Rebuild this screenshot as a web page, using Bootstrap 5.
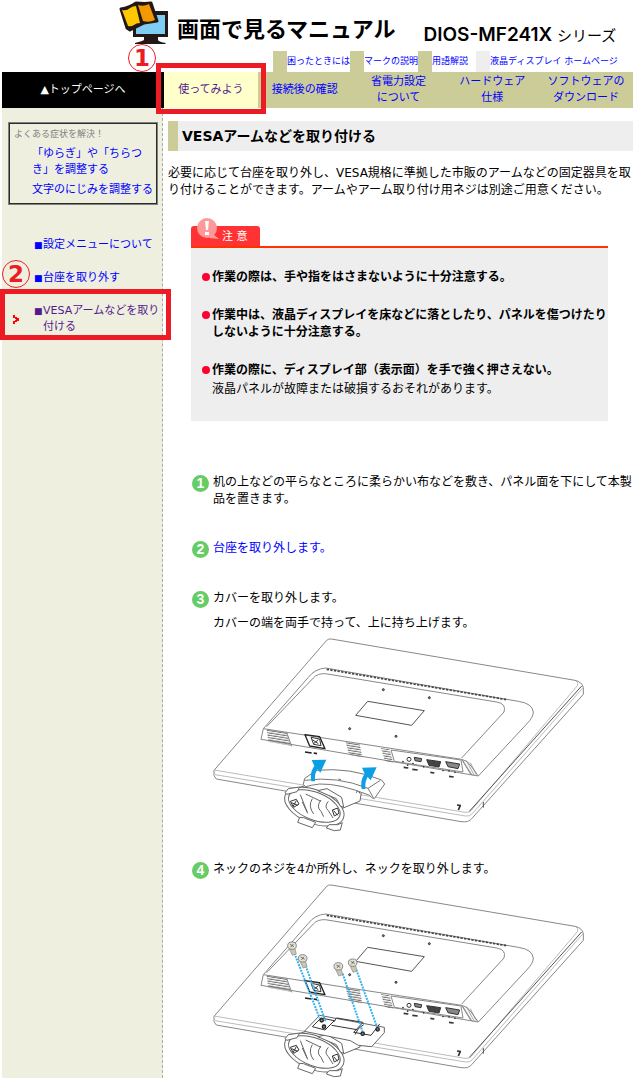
<!DOCTYPE html>
<html lang="ja">
<head>
<meta charset="utf-8">
<meta name="viewport" content="width=device-width, initial-scale=1">
<title>VESAアームなどを取り付ける</title>
<link href="https://cdn.jsdelivr.net/npm/bootstrap@5.3.0/dist/css/bootstrap.min.css" rel="stylesheet">
<script src="https://cdn.jsdelivr.net/npm/bootstrap@5.3.0/dist/js/bootstrap.bundle.min.js" defer></script>
<style>
:root { --khaki: #cccc99; --pale: #efefe0; --grey: #eeeeee; --mark-red: #ed1c24; }
body { font-family: "DejaVu Sans", "Noto Sans CJK JP", sans-serif; font-size: 12px; line-height: 17px; color: #000; background: #fff; }
a { color: #00f; text-decoration: none; }
a:hover { text-decoration: underline; }
a.visited-link { color: #551a8b; }
.site-head { height: 51px; padding-left: 118px; }
.site-title { font-family: "Noto Sans CJK JP", sans-serif; font-size: 22px; line-height: 28px; font-weight: 700; margin: 13px 0 0 8px; white-space: nowrap; }
.model { font-family: Inter, "Noto Sans CJK JP", sans-serif; font-size: 19px; line-height: 24px; font-weight: 600; margin: 23px 0 0 28px; white-space: nowrap; }
.model span { font-size: 15px; font-weight: 400; }
.util { height: 21px; font-size: 9px; line-height: 21px; margin-left: 273px; white-space: nowrap; }
.util a { border-left: 14px solid var(--khaki); }
.util a.outside { border-color: var(--grey); }
.main-nav { margin-left: 2px; font-size: 11px; line-height: 16px; background: var(--khaki); }
.main-nav > * { height: 36px; }
.main-nav .home-cell { width: 162px; background: #000; color: #fff; flex: none; }
.nav-cell { flex: 1 1 0; min-width: 0; }
.now-cell { background: #ffffcc; }
.ring { border: 5px solid var(--mark-red); position: absolute; z-index: 2; pointer-events: none; }
.ring-nav { inset: -9px -8px -6px -8px; }
.ring-side { inset: -14px -9px -5px -2px; }
.num { position: absolute; z-index: 3; width: 28px; height: 28px; border: 1px solid var(--mark-red); border-radius: 50%; background: #fff; color: var(--mark-red); font-size: 23px; line-height: 26px; font-weight: 700; text-align: center; }
.num-nav { left: -36px; top: -28px; }
.num-side { left: 0; top: -43px; background: var(--pale); }
.side { width: 161px; margin-left: 2px; flex: none; background: var(--pale); border-right: 1px dashed #aaa; font-size: 11px; line-height: 16px; }
.faq { margin: 14px 4px 0 6px; height: 83px; border: 1px solid #808080; box-shadow: inset 0 0 0 1px #2c2c2c; padding: 3px 0 0 5px; white-space: nowrap; }
.faq h2 { font-size: 9px; line-height: 16px; color: #808080; margin: 0 0 4px; font-weight: 400; }
.faq a { display: block; margin: 0 0 4px 18px; }
.menu { margin-top: 32px; }
.menu li { position: relative; margin-bottom: 17px; padding-left: 32px; }
.sq { width: 9px; flex: none; font-size: 9px; }
.chev { position: absolute; left: 11px; top: 12px; }
.page-body { padding: 13px 0 0 5px; min-width: 0; }
.page-title { font-size: 14px; line-height: 30px; font-weight: 700; background: var(--grey); border-left: 10px solid var(--khaki); padding-left: 4px; margin: 0 0 14px; }
.caution { margin: 27px 25px 0 23px; }
.tab { width: 69px; height: 20px; border-radius: 3px 3px 0 0; background: #f33; color: #fff; position: relative; font-size: 11px; line-height: 22px; padding-left: 31px; }
.tab svg { position: absolute; left: 5px; top: -9px; }
.caution-box { background: var(--grey); border-top: 2px solid #f30; padding: 21px 0 23px 11px; }
.caution-box li { margin-bottom: 21px; display: flex; white-space: nowrap; }
.caution-box li:last-child { margin-bottom: 0; }
.caution-box p { margin-top: 2px; }
.dot { width: 8px; height: 8px; border-radius: 50%; background: #ff0033; margin: 4px 2px 0 0; flex: none; }
.steps { margin: 53px 0 0 23px; }
.steps li { display: flex; margin-bottom: 32px; }
.step-no { width: 17px; height: 17px; margin: 1px 4px 0 1px; border-radius: 50%; background: #6c6; color: #fff; font: 700 14px/17px "Liberation Sans", sans-serif; text-align: center; flex: none; }
.step-text { flex: 1; min-width: 0; }
.steps .drawing { margin-bottom: 29px; }
.steps .drawing:last-child { margin-bottom: 0; }
.figure-art { display: block; width: 380px; max-width: none; height: auto; margin-left: -8px; }
</style>
</head>
<body>
<header>
  <div class="site-head d-flex">
    <svg width="51" height="47" viewBox="0 0 51 47" aria-hidden="true" class="flex-shrink-0">
      <path d="M26 36h14v4q1 2 8 3l-1 1H17v-1q8-2 9-3z" fill="#231815"/>
      <path d="M17 11h33v26H15V28z" fill="#231815"/>
      <path d="M30 15h17v19H18v-6z" fill="#7ecef4"/>
      <path d="M3 9q8-1 15-6 9 1 15 0l6 18-13 2-6 3-8 4-3-2z" fill="#231815" stroke="#231815" stroke-width="3" stroke-linejoin="round"/>
      <path d="M4 10q5 1 8-2 3-2 6-2l4 17q-4 0-6 2-3 2-6 1z" fill="#fdc800"/>
      <path d="M20 5q6 2 11-1l6 16q-6 3-12 1z" fill="#f39800"/>
    </svg>
    <h1 class="site-title">画面で見るマニュアル</h1>
    <div class="model">DIOS-MF241X <span>シリーズ</span></div>
  </div>
  <div class="util d-flex">
    <a href="#">困ったときには</a><a href="#">マークの説明</a><a href="#">用語解説</a><a href="#" class="outside ms-2">液晶ディスプレイ ホームページ</a>
  </div>
  <nav class="main-nav d-flex text-center">
    <a href="#" class="home-cell d-flex align-items-center justify-content-center">▲トップページへ</a>
    <div class="nav-cell now-cell position-relative d-flex align-items-center justify-content-center">
      <a href="#" class="visited-link">使ってみよう</a>
      <span class="ring ring-nav"></span><span class="num num-nav">1</span>
    </div>
    <a href="#" class="nav-cell d-flex align-items-center justify-content-center">接続後の確認</a>
    <a href="#" class="nav-cell d-flex align-items-center justify-content-center">省電力設定<br>について</a>
    <a href="#" class="nav-cell d-flex align-items-center justify-content-center">ハードウェア<br>仕様</a>
    <a href="#" class="nav-cell d-flex align-items-center justify-content-center">ソフトウェアの<br>ダウンロード</a>
  </nav>
</header>
<div class="d-flex">
  <aside class="side">
    <section class="faq">
      <h2>よくある症状を解決！</h2>
      <a href="#">「ゆらぎ」や「ちらつ<br>き」を調整する</a>
      <a href="#">文字のにじみを調整する</a>
    </section>
    <ul class="menu list-unstyled mb-0">
      <li><a href="#" class="d-flex"><span class="sq">■</span>設定メニューについて</a></li>
      <li><a href="#" class="d-flex"><span class="sq">■</span>台座を取り外す</a></li>
      <li><a href="#" class="d-flex visited-link"><span class="sq">■</span><span>VESAアームなどを取り付ける</span></a>
        <svg class="chev" width="7" height="9" viewBox="0 0 7 9" aria-hidden="true"><path d="M0 0h2v2h2v1h2v3H4v1H2v2H0V6h2V5h1V4H2V3H0z" fill="#f00"/></svg>
        <span class="ring ring-side"></span><span class="num num-side">2</span>
      </li>
    </ul>
  </aside>
  <main class="page-body flex-grow-1">
    <h2 class="page-title">VESAアームなどを取り付ける</h2>
    <p class="mb-0">必要に応じて台座を取り外し、VESA規格に準拠した市販のアームなどの固定器具を取<br>り付けることができます。アームやアーム取り付け用ネジは別途ご用意ください。</p>
    <section class="caution">
      <div class="tab">注 意
        <svg width="24" height="24" viewBox="0 0 24 24" aria-hidden="true"><path d="M17 17l6 5-10-1z" fill="#ff9999"/><circle cx="11" cy="11" r="10" fill="#ff9999"/><path d="M9 4h4l-1 9h-2zM9 15h4v3H9z" fill="#fff"/></svg>
      </div>
      <div class="caution-box">
        <ul class="list-unstyled mb-0">
          <li><span class="dot"></span><strong>作業の際は、手や指をはさまないように十分注意する。</strong></li>
          <li><span class="dot"></span><strong>作業中は、液晶ディスプレイを床などに落としたり、パネルを傷つけたり<br>しないように十分注意する。</strong></li>
          <li><span class="dot"></span><div><strong>作業の際に、ディスプレイ部（表示面）を手で強く押さえない。</strong><p class="mb-0">液晶パネルが故障または破損するおそれがあります。</p></div></li>
        </ul>
      </div>
    </section>
    <ol class="steps list-unstyled mb-0">
      <li><span class="step-no">1</span><div class="step-text">机の上などの平らなところに柔らかい布などを敷き、パネル面を下にして本製<br>品を置きます。</div></li>
      <li><span class="step-no">2</span><div class="step-text"><a href="#">台座を取り外します。</a></div></li>
      <li class="drawing"><span class="step-no">3</span><div class="step-text"><p class="mb-2">カバーを取り外します。</p><p class="mb-0">カバーの端を両手で持って、上に持ち上げます。</p>
        <svg class="figure-art" viewBox="0 0 1140 600" role="img" aria-label="カバーの取り外し">
          <defs>
            <pattern id="vent" width="60" height="7" patternUnits="userSpaceOnUse" patternTransform="rotate(9)"><path d="M0 3h60" stroke="#666" stroke-width="3"/></pattern>
            <g id="monitor" fill="none" stroke="#888" stroke-width="3" stroke-linejoin="round">
              <path d="M27 415 365 25q5-5 14-4l731 124q22 5 25 22v20L800 560q-9 12-32 9L34 441l-7-10z" fill="#fff"/>
              <path d="M27 414 780 541q12 2 20-7l318-374q4-8-6-14M30 428l752 124q12 2 20-7l332-378" stroke="#999" stroke-width="2"/>
              <path d="M793 538 1130 162M835 510v17" stroke="#555"/>
              <path d="M175 290 310 136q20-26 52-28l578 100q42 6 45 32 0 16-20 36L820 432 168 322z"/>
              <path d="M185 284 325 138q12-14 36-13l514 85q30 5 22 30L770 378M175 290l595 92q20 4 28 20l22 30M770 382l28 46"/>
              <path d="M365 112 905 203" stroke="#444" stroke-width="5" stroke-dasharray="7 4"/>
              <path d="m488 208 170 28-38 44-168-30z" stroke="#555"/>
              <path d="m185 292 60 9 13 40-68-12zm237 37 42 7 8 40-40-8zm106 19 25 4 12 40-25-5z" fill="url(#vent)" stroke="none"/>
              <path d="m245 301 15 42m298 11 210 30 6 36-206-32z"/>
              <path d="m300 308 44 6 16 36-46-8z" stroke="#222" stroke-width="4"/>
              <path d="m318 316 26 5 4 20-22-4zm4 7 18 12m0-12-14 12" stroke="#333"/>
              <path d="m300 360 20 3m6 0 10 2" stroke="#222" stroke-width="5"/>
              <g fill="#888" stroke="#333">
                <circle cx="535" cy="173" r="3"/><circle cx="434" cy="290" r="3"/><circle cx="573" cy="313" r="3"/><circle cx="673" cy="197" r="3"/>
                <circle cx="612" cy="382" r="6" fill="#fff"/><path d="m628 376 22 4-2 9-18-3z"/><path d="m665 383 42 6-5 16-30-5z" fill="#444"/><path d="m722 389 42 7-5 14-30-6z"/>
              </g>
              <path d="m592 388 4 1m10 10 4 1m12-6 4 1m28 9 4 1m54 10 4 1m14 0 4 1m14 3 4 1" stroke="#222" stroke-width="4"/>
              <path d="m596 406 14 2m12 4 16 2m38 7 12 2m44 10 14 2M766 520l-6 14m-4-15 12 2" stroke="#333" stroke-width="5"/>
              <path d="m774 386 28 44m-18-44 24 44m-12-38 18 36" stroke="#777" stroke-width="2"/>
            </g>
            <g id="stand" fill="none" stroke="#666" stroke-width="3" stroke-linejoin="round">
              <path d="M265 472q50-16 85-24l120 26-5 33-60 25" fill="#fff"/>
              <ellipse cx="328" cy="524" rx="94" ry="50" transform="rotate(22 328 524)" fill="#fff"/>
              <ellipse cx="328" cy="522" rx="82" ry="41" transform="rotate(22 328 522)"/>
              <path d="m284 556-6 15 44 16 10-16-16-6-20-8zm88 22-8 10 24 8 18-2 6-22-14 6zM240 482l10-12 34-5-8 14-30 8zm98-6 28-6 44 26 6 30-10-4-12-22z" fill="#fff"/>
              <path d="m286 488 22 56m-6-58 46 22m-56 2 14 30m16-40q-14 22 4 46m22-42q-16 20 0 34l8 16m14-46q-14 16 0 28l14 22"/>
              <path d="m256 508 18-6 8 14-16 10zm4 4 18 8m-14 4 10-18m108 28 16-6 4 16-14 8zm4 2 12 14m60-80 6 14m-10-2 10-16" stroke="#333"/>
            </g>
          </defs>
          <use href="#monitor"/>
          <use href="#stand"/>
          <g fill="#fff" stroke="#777" stroke-width="3" stroke-linejoin="round">
            <path d="m295 457 4-18 36-24q100-10 195 29l9 12-31 44q-10-2-14-10-90-36-150-34-30 4-42 8z"/>
            <path d="M299 445q96-14 190 24l16 28m-16-28 37-24M400 441l8 2" fill="none"/>
          </g>
          <path id="lift" d="M319 448q-5-28 9-46l-8-18 44-1-18 39-9-10q-9 14-7 36z" fill="#0c9fe6"/>
          <use href="#lift" x="151" y="23"/>
        </svg></div>
      </li>
      <li class="drawing"><span class="step-no">4</span><div class="step-text">ネックのネジを4か所外し、ネックを取り外します。
        <svg class="figure-art" viewBox="0 0 1140 600" role="img" aria-label="ネックの取り外し">
          <use href="#monitor"/>
          <use href="#stand"/>
          <g fill="#fff" stroke="#666" stroke-width="3" stroke-linejoin="round">
            <path d="m298 460 46-48 194 36v16l-38 42-40-4-24-14z"/>
            <path d="m322 446 26-26 40 8-28 28zm58-4 76 13m-60-35 78 13-28 30 52 9 26-34m-130-19-6 12M450 470l10-18 16-12" fill="none" stroke="#333"/>
          </g>
          <g fill="#888" stroke="#222" stroke-width="4"><circle cx="350" cy="427" r="5"/><circle cx="357" cy="446" r="5"/><circle cx="473" cy="467" r="5"/><circle cx="518" cy="454" r="5"/></g>
          <path d="m268 225 76 196m-42-158 60 168m51-144 59 172m-18-184 62 172" fill="none" stroke="#36b3ec" stroke-width="6" stroke-dasharray="6 3"/>
          <g id="screw"><path d="m253 212 16-4 5 20-12 4z" fill="#c9c6b4" stroke="#888" stroke-width="2"/><ellipse cx="261" cy="203" rx="13" ry="11" fill="#e5e2d3" stroke="#888" stroke-width="3"/><path d="m255 199 12 7m-10 2 8-10" stroke="#444" stroke-width="2"/></g>
          <use href="#screw" x="32" y="38"/><use href="#screw" x="139" y="62"/><use href="#screw" x="182" y="51"/>
        </svg></div>
      </li>
    </ol>
  </main>
</div>
</body>
</html>
